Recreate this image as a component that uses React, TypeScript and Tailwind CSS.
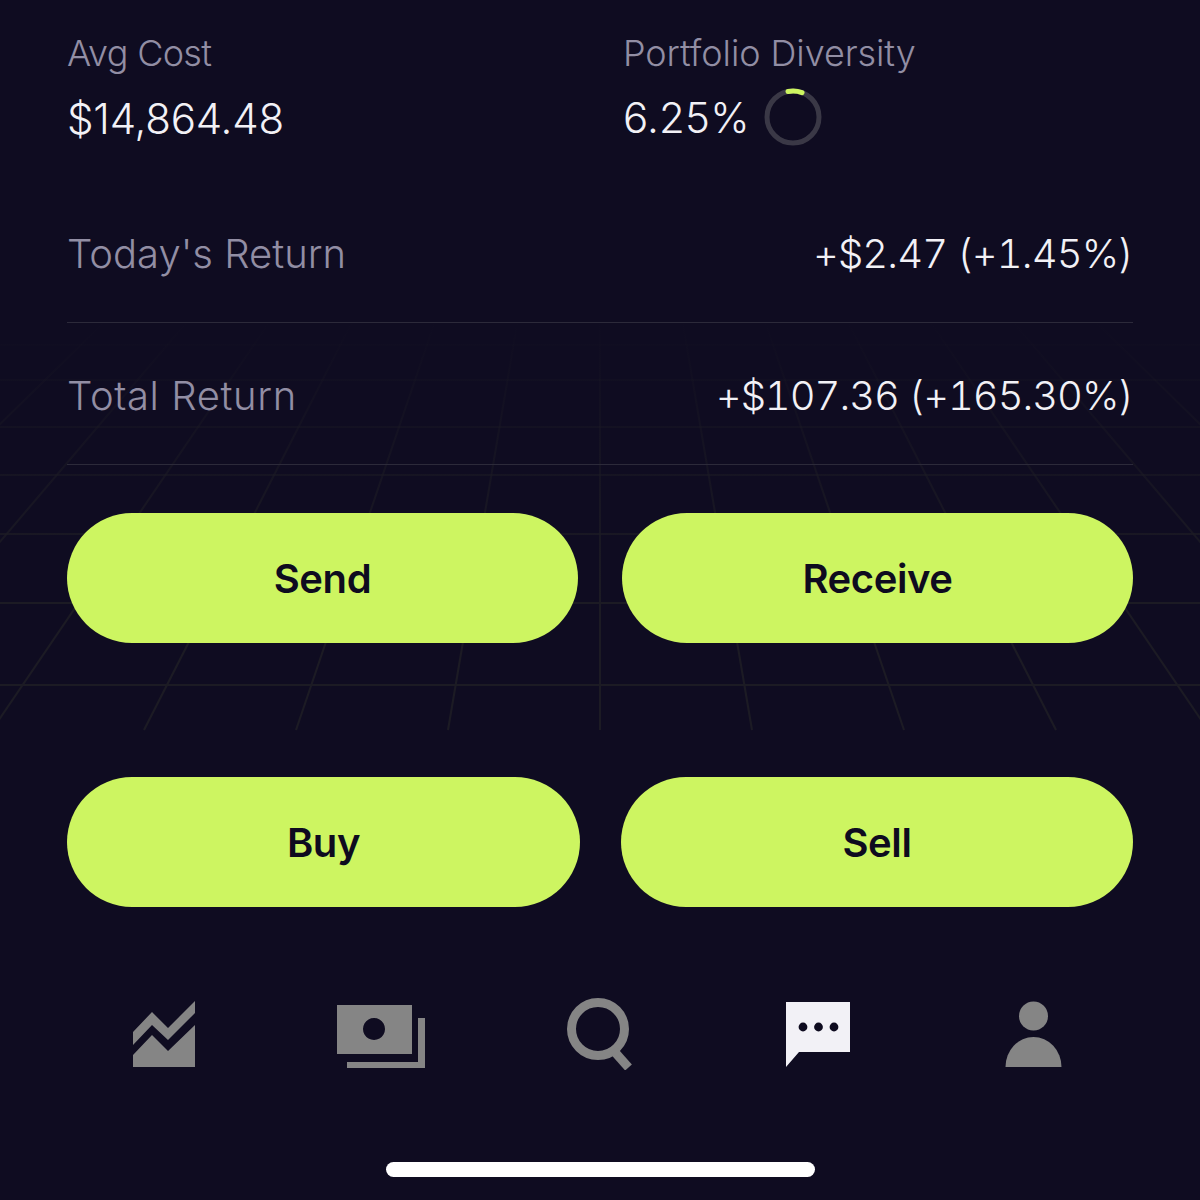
const vs = [-6, -5, -4, -3, -2, -1, 0, 1, 2, 3, 4, 5, 6];
const hs = [345, 380, 427, 475, 534, 603, 685];

function Grid() {
  return (
    <svg className="absolute left-0 top-0" width="1200" height="1200" fill="none" stroke="url(#fade)" strokeWidth="2">
      <defs>
        <linearGradient id="fade" gradientUnits="userSpaceOnUse" x1="0" y1="320" x2="0" y2="600">
          <stop offset="0" stopColor="#1c1b24" stopOpacity="0" />
          <stop offset="1" stopColor="#1c1b24" stopOpacity="1" />
        </linearGradient>
      </defs>
      {hs.map((y) => (
        <rect key={y} x="0" y={y - 1} width="1200" height="2" fill="url(#fade)" stroke="none" />
      ))}
      {vs.map((k) => {
        const x = (y: number) => 600 + (k * 152 * (y + 164)) / 894;
        return <line key={k} x1={x(322)} y1="322" x2={x(730) + 0.01} y2="730" />;
      })}
    </svg>
  );
}

function Row({ label, value, lt, vt }: { label: string; value: string; lt: string; vt: string }) {
  return (
    <div className="flex h-[142px] items-center justify-between border-b border-[#2c2a3a] pt-[4px]">
      <span className={`text-[40px] font-[350] text-[#928ea4] ${lt}`}>{label}</span>
      <span className={`text-[40px] font-[350] tabular-nums text-[#f2f1f6] ${vt}`}>{value}</span>
    </div>
  );
}

function Btn({ children, w }: { children: string; w: string }) {
  return (
    <button className={`flex h-[130px] items-center justify-center rounded-full bg-[#cdf561] pt-[2px] text-[40px] font-semibold tracking-[-0.4px] text-[#0e0b1f] ${w}`}>
      {children}
    </button>
  );
}

export default function App() {
  return (
    <div className="relative h-[1200px] w-[1200px] overflow-hidden bg-[#0f0c21] font-['Inter',sans-serif]">
      <Grid />
      <div className="relative flex flex-col px-[67px] pt-[30px]">
        <div className="flex">
          <div className="w-[556px]">
            <div className="text-[36px] font-[350] leading-[46px] tracking-[-0.7px] text-[#928ea4]">Avg Cost</div>
            <div className="mt-[17px] text-[42px] font-[350] leading-[52px] tracking-[-0.2px] text-[#f2f1f6]">$14,864.48</div>
          </div>
          <div>
            <div className="text-[36px] font-[350] leading-[46px] tracking-[-0.08px] text-[#928ea4]">Portfolio Diversity</div>
            <div className="mt-[12px] flex items-center gap-[14px]">
              <span className="pt-[2px] text-[42px] font-[350] leading-[52px] tracking-[0.2px] text-[#f2f1f6]">6.25%</span>
              <svg width="58" height="58" viewBox="0 0 58 58" fill="none">
                <circle cx="29" cy="29" r="26" stroke="#3a3846" strokeWidth="5" />
                <path d="M24 3.5 A26 26 0 0 1 38 4.6" stroke="#cdf561" strokeWidth="5" strokeLinecap="round" />
              </svg>
            </div>
          </div>
        </div>

        <div className="mt-[35px]">
          <Row label="Today's Return" value="+$2.47 (+1.45%)" lt="tracking-[0px]" vt="tracking-[-0.88px]" />
          <Row label="Total Return" value="+$107.36 (+165.30%)" lt="tracking-[0.6px]" vt="tracking-[-1.03px]" />
        </div>

        <div className="mt-[48px] flex justify-between">
          <Btn w="w-[511px]">Send</Btn>
          <Btn w="w-[511px]">Receive</Btn>
        </div>
        <div className="mt-[134px] flex justify-between">
          <Btn w="w-[513px]">Buy</Btn>
          <Btn w="w-[512px]">Sell</Btn>
        </div>

        <div className="mt-[91px] flex h-[72px] items-start">
          <svg className="ml-[66px] mt-[3px]" width="62" height="66" viewBox="0 0 62 66" fill="#858585">
            <path d="M0 31 L19 11 L35 27 L62 0 L62 12 L35 39 L19 24 L0 44Z M0 54 L19 34 L35 50 L62 24 L62 66 L0 66Z" />
          </svg>
          <svg className="ml-[142px] mt-[7px]" width="89" height="63" viewBox="0 0 89 63" fill="#858585">
            <path fillRule="evenodd" d="M0 0 H75 V49 H0Z M37 13 a11 11 0 1 0 .01 0Z" />
            <path d="M81 13 H88 V63 H10 V57 H81Z" />
          </svg>
          <svg className="ml-[141px]" width="67" height="72" viewBox="0 0 67 72" fill="none" stroke="#858585">
            <circle cx="31" cy="31" r="26.5" strokeWidth="9" />
            <line x1="46" y1="52" x2="61.5" y2="69.5" strokeWidth="9" />
          </svg>
          <svg className="ml-[152px] mt-[4px]" width="65" height="66" viewBox="0 0 65 66">
            <path d="M0 0 H64 V50 H13 L0 65Z" fill="#f2f1f6" />
            <circle cx="17" cy="25" r="4.4" fill="#0e0b1f" />
            <circle cx="32.5" cy="25" r="4.4" fill="#0e0b1f" />
            <circle cx="48" cy="25" r="4.4" fill="#0e0b1f" />
          </svg>
          <svg className="ml-[154px] mt-[3px]" width="58" height="67" viewBox="0 0 58 67" fill="#858585">
            <circle cx="28.5" cy="15" r="14.5" />
            <path d="M0.5 66 A28 30 0 0 1 56.5 66Z" />
          </svg>
        </div>

        <div className="mt-[92px] ml-[319px] h-[15px] w-[429px] rounded-full bg-white" />
      </div>
    </div>
  );
}
